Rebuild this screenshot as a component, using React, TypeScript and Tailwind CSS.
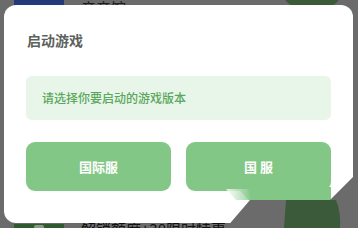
import React from "react";

const font = { fontFamily: '"Noto Sans CJK SC", "Noto Sans", sans-serif' };

export default function App() {
  return (
    <div
      className="relative w-[358px] h-[228px] overflow-hidden bg-[#6b6b6b]"
      style={font}
    >
      {/* background list (dimmed) */}
      <div className="flex flex-col -mt-[45px] gap-[219px]">
        <div className="flex h-[50px] pl-[14px] pr-[15px]">
          <div className="w-[50px] h-[50px] bg-[#22397a] shrink-0" />
          <div className="ml-[17px] pt-[44px] text-[15px] leading-[18px] text-[#1d1d1d] whitespace-nowrap">
            音音馆
          </div>
          <div className="ml-auto mt-[-2px] w-[62px] h-[56px] rounded-[22px] bg-[#3b5a37]" />
        </div>
        <div className="flex h-[50px] pl-[14px] pr-[15px]">
          <div className="w-[50px] h-[50px] bg-[#2e5a2e] shrink-0 flex justify-center">
            <div className="mt-[1px] w-[10px] h-[4px] rounded-full bg-[#8a9a8a]" />
          </div>
          <div className="ml-[17px] -mt-[4px] text-[15px] leading-[18px] text-[#111] whitespace-nowrap">
            解锁额度+30限时特惠
          </div>
        </div>
      </div>

      {/* dialog */}
      <div className="absolute left-[4px] top-[5px] w-[349px] h-[218px] rounded-[12px] bg-white px-[22px] pt-[25px] flex flex-col">
        <div className="pl-[1px] text-[14px] leading-[20px] font-bold text-[#5c615c]">
          启动游戏
        </div>
        <div className="mt-[26px] h-[44px] rounded-[6px] bg-[#e8f5e9] flex items-center pl-[16px] text-[12px] font-medium text-[#5aa75d]">
          请选择你要启动的游戏版本
        </div>
        <div className="mt-[22px] flex gap-[15px]">
          <button className="w-[145px] h-[49px] rounded-[9px] bg-[#82c785] text-white text-[13px] font-bold flex items-center justify-center">
            国际服
          </button>
          <button className="w-[145px] h-[49px] rounded-[9px] bg-[#82c785] text-white text-[13px] font-bold flex items-center justify-center">
            国 服
          </button>
        </div>
      </div>

      {/* screen fold artifact */}
      <svg
        className="absolute inset-0 pointer-events-none"
        width="358"
        height="228"
        viewBox="0 0 358 228"
      >
        <defs>
          <linearGradient id="wb" x1="0" y1="0" x2="1" y2="0">
            <stop offset="0" stopColor="#ffffff" />
            <stop offset="1" stopColor="#82c785" />
          </linearGradient>
        </defs>
        <polygon points="236,187 331,187 331,200 249,200" fill="#82c785" />
        <polygon points="226,189 248,189 252,200 236,200" fill="url(#wb)" opacity="0.8" />
        <polygon
          points="226,228 250,200 330,200 355,175 358,175 358,228"
          fill="#6b6b6b"
        />
        <path
          d="M286,200 L336,200 Q341,212 340,228 L284,228 Z"
          fill="#3a5a3a"
        />
      </svg>
    </div>
  );
}
